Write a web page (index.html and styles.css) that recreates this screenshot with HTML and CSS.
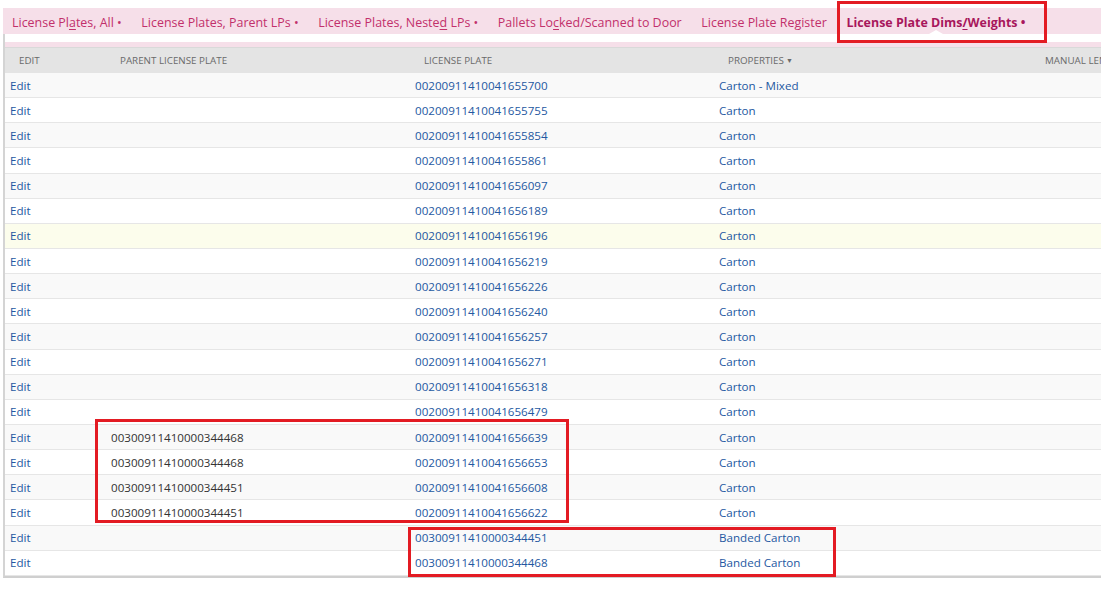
FILE: index.html
```html
<!DOCTYPE html>
<html lang="en">
<head>
<meta charset="utf-8">
<title>License Plate Dims/Weights</title>
<link rel="stylesheet" href="styles.css">
</head>
<body>
<div class="page">
  <nav class="tabs">
    <a class="tab">License Pl<u>a</u>tes, All •</a>
    <a class="tab">License Plates, Parent LPs •</a>
    <a class="tab">License Plates, Neste<u>d</u> LPs •</a>
    <a class="tab">Pallets Lo<u>c</u>ked/Scanned to Door</a>
    <a class="tab">License Plate Register</a>
    <a class="tab active">License Plate Dims<u>/</u>Weights •</a>
  </nav>
  <div class="panel">
    <div class="strip"></div>
    <div class="grid">
      <div class="row head">
        <div class="cell">EDIT</div>
        <div class="cell">PARENT LICENSE PLATE</div>
        <div class="cell">LICENSE PLATE</div>
        <div class="cell">PROPERTIES<span class="caret">▼</span></div>
        <div class="cell">MANUAL LENGTH</div>
      </div>
      <div class="row"><div class="cell link">Edit</div><div class="cell"></div><div class="cell link">00200911410041655700</div><div class="cell link">Carton - Mixed</div><div class="cell"></div></div>
      <div class="row"><div class="cell link">Edit</div><div class="cell"></div><div class="cell link">00200911410041655755</div><div class="cell link">Carton</div><div class="cell"></div></div>
      <div class="row"><div class="cell link">Edit</div><div class="cell"></div><div class="cell link">00200911410041655854</div><div class="cell link">Carton</div><div class="cell"></div></div>
      <div class="row"><div class="cell link">Edit</div><div class="cell"></div><div class="cell link">00200911410041655861</div><div class="cell link">Carton</div><div class="cell"></div></div>
      <div class="row"><div class="cell link">Edit</div><div class="cell"></div><div class="cell link">00200911410041656097</div><div class="cell link">Carton</div><div class="cell"></div></div>
      <div class="row"><div class="cell link">Edit</div><div class="cell"></div><div class="cell link">00200911410041656189</div><div class="cell link">Carton</div><div class="cell"></div></div>
      <div class="row hover"><div class="cell link">Edit</div><div class="cell"></div><div class="cell link">00200911410041656196</div><div class="cell link">Carton</div><div class="cell"></div></div>
      <div class="row"><div class="cell link">Edit</div><div class="cell"></div><div class="cell link">00200911410041656219</div><div class="cell link">Carton</div><div class="cell"></div></div>
      <div class="row"><div class="cell link">Edit</div><div class="cell"></div><div class="cell link">00200911410041656226</div><div class="cell link">Carton</div><div class="cell"></div></div>
      <div class="row"><div class="cell link">Edit</div><div class="cell"></div><div class="cell link">00200911410041656240</div><div class="cell link">Carton</div><div class="cell"></div></div>
      <div class="row"><div class="cell link">Edit</div><div class="cell"></div><div class="cell link">00200911410041656257</div><div class="cell link">Carton</div><div class="cell"></div></div>
      <div class="row"><div class="cell link">Edit</div><div class="cell"></div><div class="cell link">00200911410041656271</div><div class="cell link">Carton</div><div class="cell"></div></div>
      <div class="row"><div class="cell link">Edit</div><div class="cell"></div><div class="cell link">00200911410041656318</div><div class="cell link">Carton</div><div class="cell"></div></div>
      <div class="row"><div class="cell link">Edit</div><div class="cell"></div><div class="cell link">00200911410041656479</div><div class="cell link">Carton</div><div class="cell"></div></div>
      <div class="row"><div class="cell link">Edit</div><div class="cell">00300911410000344468</div><div class="cell link">00200911410041656639</div><div class="cell link">Carton</div><div class="cell"></div></div>
      <div class="row"><div class="cell link">Edit</div><div class="cell">00300911410000344468</div><div class="cell link">00200911410041656653</div><div class="cell link">Carton</div><div class="cell"></div></div>
      <div class="row"><div class="cell link">Edit</div><div class="cell">00300911410000344451</div><div class="cell link">00200911410041656608</div><div class="cell link">Carton</div><div class="cell"></div></div>
      <div class="row"><div class="cell link">Edit</div><div class="cell">00300911410000344451</div><div class="cell link">00200911410041656622</div><div class="cell link">Carton</div><div class="cell"></div></div>
      <div class="row"><div class="cell link">Edit</div><div class="cell"></div><div class="cell link">00300911410000344451</div><div class="cell link">Banded Carton</div><div class="cell"></div></div>
      <div class="row"><div class="cell link">Edit</div><div class="cell"></div><div class="cell link">00300911410000344468</div><div class="cell link">Banded Carton</div><div class="cell"></div></div>
    </div>
  </div>
  <div class="mark mark-tab"></div>
  <div class="mark mark-nested"></div>
  <div class="mark mark-banded"></div>
</div>
</body>
</html>
```

FILE: styles.css
```css
html, body {
  margin: 0;
  padding: 0;
  background: #ffffff;
  overflow: hidden;
}

.page {
  position: relative;
  width: 1101px;
  height: 593px;
  padding: 8px 0 0 3px;
  box-sizing: border-box;
  font-family: "Open Sans", "Liberation Sans", sans-serif;
  overflow: hidden;
}

.tabs {
  display: flex;
  align-items: stretch;
  gap: 19.6px;
  height: 26px;
  padding-left: 9px;
  background: #f6dfe9;
  white-space: nowrap;
}

.tab {
  position: relative;
  display: block;
  padding-top: 3px;
  line-height: 23px;
  font-size: 12.45px;
  color: #c2306b;
  text-decoration: none;
}

.tab u {
  text-decoration: underline;
  text-underline-offset: 2px;
}

.tab.active {
  font-weight: 700;
  color: #a8175c;
}

.tab.active::after {
  content: "";
  position: absolute;
  left: 50%;
  bottom: 0;
  margin-left: -7px;
  border-left: 7px solid transparent;
  border-right: 7px solid transparent;
  border-bottom: 4px solid #ffffff;
}

.panel {
  border-left: 2px solid #d4d4d4;
  border-bottom: 2px solid #cfcfcf;
  padding-top: 8px;
  width: 1400px;
}

.strip {
  height: 5px;
  background: #f6dfe9;
  border-bottom: 1px solid #d9d9d9;
}

.grid {
  display: flex;
  flex-direction: column;
}

.row {
  display: grid;
  grid-template-columns: 101px 304px 304px 317px 300px;
  height: 25.15px;
  box-sizing: border-box;
  border-bottom: 1px solid #e6e6e6;
  font-size: 11.6px;
  color: #333333;
  align-items: center;
}

.row:nth-child(even) {
  background: #f9f9f9;
}

.row:nth-child(odd) {
  background: #ffffff;
}

.row.hover {
  background: #fcfdec;
}

.row.head {
  height: 25px;
  background: #e4e4e4;
  border-bottom: none;
  font-size: 9.8px;
  color: #6a6a6a;
}

.cell {
  padding-left: 5px;
  white-space: nowrap;
  overflow: hidden;
}

.head .cell {
  padding-left: 14px;
}

.link {
  color: #2458a1;
}

.caret {
  font-size: 7px;
  margin-left: 2px;
  vertical-align: 1px;
}

.mark {
  position: absolute;
  border: 3px solid #e31b23;
  box-sizing: border-box;
  pointer-events: none;
}

.mark-tab {
  left: 837px;
  top: 1px;
  width: 210px;
  height: 42px;
}

.mark-nested {
  left: 95px;
  top: 419px;
  width: 474px;
  height: 104px;
}

.mark-banded {
  left: 408px;
  top: 527px;
  width: 428px;
  height: 50px;
}
```
